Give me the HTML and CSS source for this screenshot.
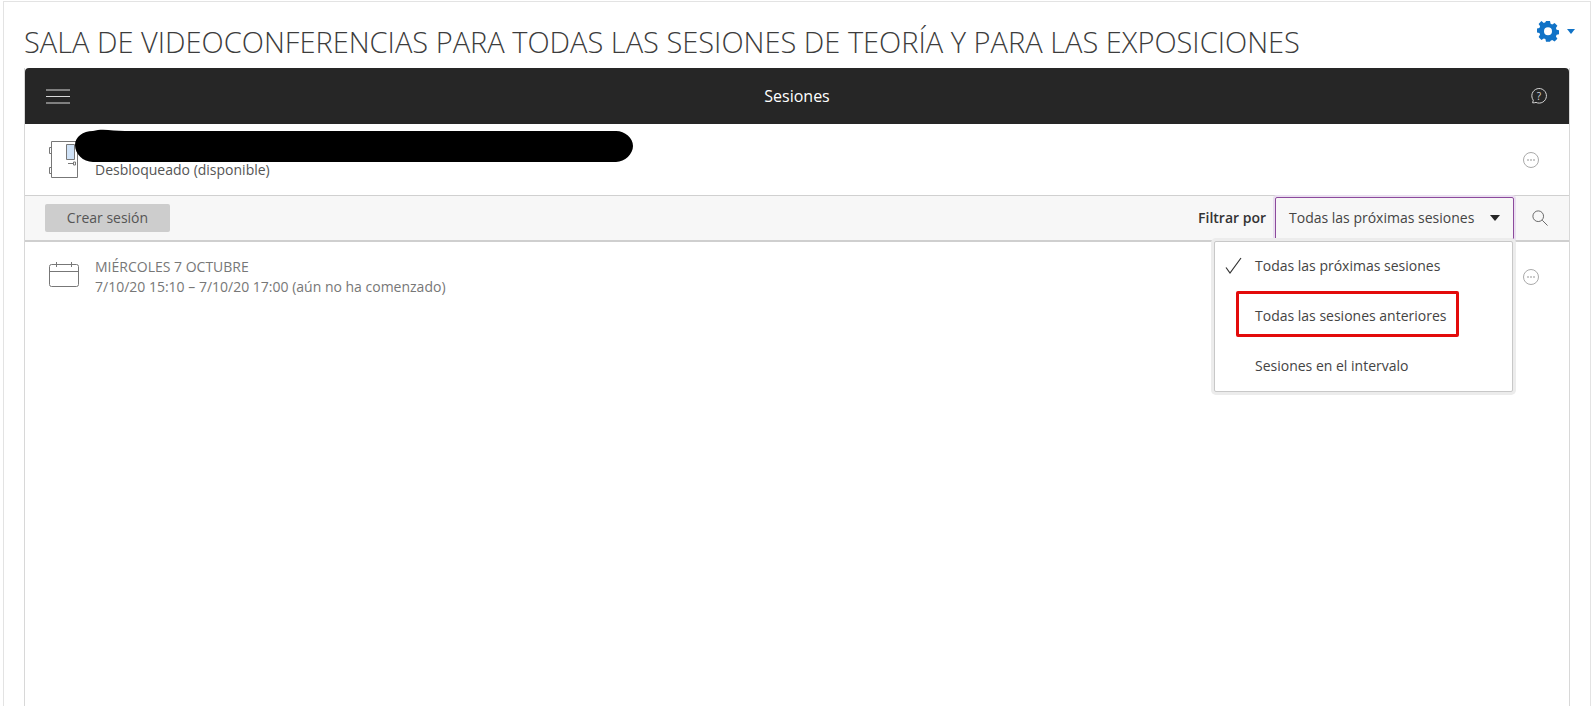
FILE: index.html
```html
<!DOCTYPE html>
<html lang="es">
<head>
    <meta charset="UTF-8">
    <title>Sesiones</title>
    <link rel="stylesheet" href="styles.css">
</head>
<body>
    <div class="frame">
        <div class="page-head">
            <h1 class="page-title">SALA DE VIDEOCONFERENCIAS PARA TODAS LAS SESIONES DE TEORÍA Y PARA LAS EXPOSICIONES</h1>
            <div class="gear-menu">
                <svg class="gear" width="22" height="22" viewBox="0 0 22 22"><path fill="#1173c7" fill-rule="evenodd" d="M9 1h4l.6 2.700 1.600.7 2.400-1.500 2.800 2.800-1.500 2.400.7 1.600 2.400.6v3.900l-2.400.6-.7 1.600 1.500 2.400-2.800 2.800-2.400-1.500-1.600.7L13 21.800H9l-.6-2.700-1.600-.7-2.400 1.500L1.600 17l1.500-2.400-.7-1.600L0 12.400V8.500l2.400-.6.7-1.600-1.500-2.400 2.800-2.800L6.800 3l1.600-.7zM11 7.300a4 4 0 1 0 0 8 4 4 0 0 0 0-8z"/></svg>
                <span class="gear-caret"></span>
            </div>
        </div>

        <div class="panel">
            <div class="top-bar">
                <svg class="burger" width="24" height="15" viewBox="0 0 24 15"><path stroke="#d9d9d9" d="M0 1h24M0 7.500h24M0 14h24"/></svg>
                <span class="top-title">Sesiones</span>
                <svg class="help" width="18" height="18" viewBox="0 0 18 18"><path fill="none" stroke="#d5d5d5" d="M2.600 15.800l.7-2.600A7.300 7.300 0 1 1 6 15.400c-1.200.4-2.300.5-3.400.4z"/><text x="9" y="12.500" class="help-mark">?</text></svg>
            </div>

            <div class="room-row">
                <svg class="row-icon door" width="30" height="38" viewBox="0 0 30 38"><g fill="none" stroke="#777" stroke-width="1"><path d="M2.500.5h26v36h-26zM.5 6.500h2v6h-2zM.5 26.500h2v6h-2z"/><path fill="#cfe2f7" d="M17.500 3.500h8v15h-8z"/><path d="M24.500 21v3h2v-3z"/></g><path stroke="#777" d="M19 22.500h5"/></svg>
                <div class="row-text">
                    <div class="room-name"></div>
                    <div>Desbloqueado (disponible)</div>
                </div>
                <svg class="more" width="18" height="18" viewBox="0 0 18 18"><circle cx="9" cy="9" r="7.500" fill="none" stroke="#aaa"/><g fill="#888"><circle cx="6" cy="9" r="0.800"/><circle cx="9" cy="9" r="0.800"/><circle cx="12" cy="9" r="0.800"/></g></svg>
                <svg class="scribble" width="558" height="36" viewBox="0 0 560 36"><path d="M18 3C8 3 0 9 0 17c0 9 8 17 18 17h525c9 0 17-8 17-16s-8-15-17-15H50C38 3 28 0 18 3z"/></svg>
            </div>

            <div class="toolbar">
                <button class="create-btn">Crear sesión</button>
                <div class="filter">
                    <span class="filter-label">Filtrar por</span>
                    <div class="select">
                        <span class="select-text">Todas las próximas sesiones</span>
                        <span class="select-caret"></span>
                    </div>
                    <svg class="search" width="16" height="16" viewBox="0 0 18 18"><g fill="none" stroke="#666" stroke-width="1.100"><circle cx="7" cy="7" r="6"/><path d="M11.500 11.500l6 6"/></g></svg>
                </div>
                <ul class="menu">
                    <li class="menu-item">
                        <svg class="check" width="18" height="18" viewBox="0 0 18 18"><path fill="none" stroke="#333" stroke-width="1.200" d="M1 10.500l4 5.500L16 1"/></svg>
                        Todas las próximas sesiones
                    </li>
                    <li class="menu-item">Todas las sesiones anteriores</li>
                    <li class="menu-item">Sesiones en el intervalo</li>
                    <li class="red-box"></li>
                </ul>
            </div>

            <div class="session-row">
                <svg class="row-icon" width="30" height="26" viewBox="0 0 30 26"><g fill="none" stroke="#777"><rect x="0.500" y="2.500" width="29" height="22" rx="2"/><path d="M.5 9.500h29M7.500 0v5M22.500 0v5"/></g></svg>
                <div class="row-text session-text">
                    <div>MIÉRCOLES 7 OCTUBRE</div>
                    <div>7/10/20 15:10 – 7/10/20 17:00 (aún no ha comenzado)</div>
                </div>
                <svg class="more" width="18" height="18" viewBox="0 0 18 18"><circle cx="9" cy="9" r="7.500" fill="none" stroke="#aaa"/><g fill="#888"><circle cx="6" cy="9" r="0.800"/><circle cx="9" cy="9" r="0.800"/><circle cx="12" cy="9" r="0.800"/></g></svg>
            </div>
        </div>
    </div>
</body>
</html>
```

FILE: styles.css
```css
html, body {
    height: 706px;
    overflow: hidden;
}
body {
    margin: 0;
    background-color: #fff;
    color: #666;
    font-family: "Open Sans", "Liberation Sans", sans-serif;
    font-size: 14px;
}
.frame {
    box-sizing: border-box;
    display: flex;
    flex-direction: column;
    height: 705px;
    margin: 1px 1px 0 3px;
    border: 1px solid #e3e3e3;
    border-bottom: none;
    padding-left: 20px;
}
.page-head {
    display: flex;
    justify-content: space-between;
    height: 66px;
}
.page-title {
    margin: 21px 0 0;
    color: #3c3c3c;
    font-size: 29px;
    font-weight: 300;
    line-height: 38px;
    white-space: nowrap;
}
.gear-menu {
    display: flex;
    align-items: center;
    gap: 8px;
    height: 22px;
    margin: 18px 15px 0 0;
}
.gear-caret {
    width: 0;
    height: 0;
    border: 4.500px solid transparent;
    border-top: 5px solid #1173c7;
    border-bottom: none;
}
.panel {
    flex: 1;
    display: flex;
    flex-direction: column;
    width: 1544px;
    border: 1px solid #d8d8d8;
    border-top: none;
    border-bottom: none;
}
.top-bar {
    display: flex;
    align-items: center;
    height: 56px;
    padding: 0 21px;
    border-radius: 4px 4px 0 0;
    background-color: #262626;
}
.top-title {
    flex: 1;
    color: #fff;
    font-size: 16px;
    text-align: center;
}
.help {
    margin-left: 6px;
}
.help-mark {
    fill: #d5d5d5;
    font-family: "Open Sans", sans-serif;
    font-size: 10px;
    text-anchor: middle;
}
.room-row {
    position: relative;
    display: flex;
    align-items: center;
    height: 71px;
    padding: 0 29px 0 24px;
    border-bottom: 1px solid #d0d0d0;
}
.row-icon {
    flex: none;
    margin-right: 16px;
}
.row-text {
    flex: 1;
    color: #555;
    line-height: 20px;
}
.room-name {
    height: 20px;
}
.scribble {
    position: absolute;
    left: 50px;
    top: 4px;
}
.toolbar {
    position: relative;
    display: flex;
    align-items: center;
    justify-content: space-between;
    height: 44px;
    padding: 0 21px 0 20px;
    border-bottom: 2px solid #cfcfcf;
    background-color: #f7f7f7;
}
.create-btn {
    width: 125px;
    height: 28px;
    padding: 0 0 2px;
    border: none;
    border-radius: 2px;
    background-color: #cdcdcd;
    color: #555;
    font: inherit;
}
.filter {
    display: flex;
    align-items: center;
}
.filter-label {
    margin-right: 9px;
    padding-bottom: 2px;
    color: #333;
    font-weight: 600;
}
.select {
    box-sizing: border-box;
    display: flex;
    align-items: center;
    justify-content: space-between;
    width: 239px;
    height: 43px;
    margin-right: 18px;
    padding: 0 13px;
    border: 1px solid #8c4a9c;
    border-radius: 2px;
    box-shadow: 0 0 0 2px #eadff0;
    color: #444;
}
.select-text {
    padding-bottom: 2px;
}
.select-caret {
    width: 0;
    height: 0;
    border: 5.500px solid transparent;
    border-top: 6px solid #262626;
    border-bottom: none;
}
.menu {
    position: absolute;
    top: 45px;
    right: 56px;
    z-index: 2;
    box-sizing: border-box;
    width: 299px;
    height: 151px;
    margin: 0;
    padding: 0;
    list-style: none;
    border: 1px solid #c8c8c8;
    border-radius: 2px;
    background-color: #fff;
    box-shadow: 0 0 0 3px #ececec;
    color: #444;
}
.menu-item {
    position: relative;
    height: 50px;
    padding-left: 40px;
    line-height: 48px;
}
.check {
    position: absolute;
    left: 10px;
    top: 15px;
}
.red-box {
    position: absolute;
    left: 21px;
    top: 49px;
    box-sizing: border-box;
    width: 223px;
    height: 46px;
    border: 3px solid #e30b0b;
    border-radius: 2px;
}
.session-row {
    display: flex;
    align-items: flex-start;
    padding: 15px 29px 0 24px;
}
.session-row .row-icon {
    margin-top: 5px;
}
.session-text {
    color: #777;
}
.more {
    flex: none;
}
.session-row .more {
    margin-top: 11px;
}
```
